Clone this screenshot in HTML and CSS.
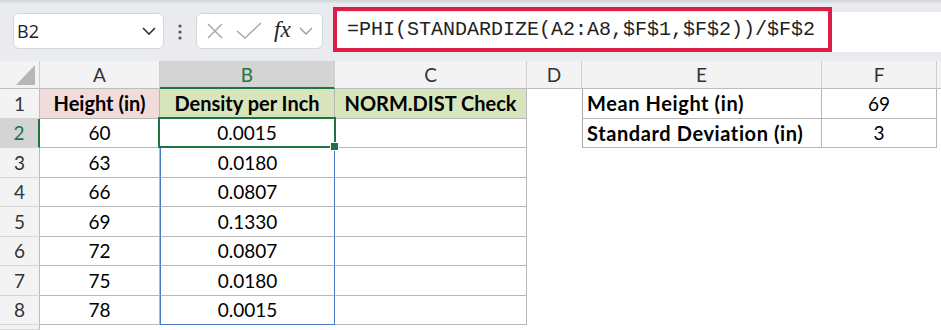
FILE: index.html
```html
<!DOCTYPE html>
<html lang="en">
  <head>
    <meta charset="UTF-8">
    <title>Density per Inch</title>
    <link rel="stylesheet" href="styles.css">
  </head>
  <body>
    <div class="toolbar">
      <div class="namebox">
        <span>B2</span>
        <svg class="chev" width="16" height="10" viewBox="0 0 16 10"><path d="M2 2 L8 8 L14 2" fill="none" stroke="#333" stroke-width="1.6"/></svg>
      </div>
      <div class="dots">
        <svg width="6" height="16" viewBox="0 0 6 16"><circle cx="3" cy="2" r="1.6" fill="#555"/><circle cx="3" cy="8" r="1.6" fill="#555"/><circle cx="3" cy="14" r="1.6" fill="#555"/></svg>
      </div>
      <div class="fxbox">
        <svg width="18" height="16" viewBox="0 0 18 16"><path d="M2 1 L16 15 M16 1 L2 15" stroke="#a9a9a9" stroke-width="1.5"/></svg>
        <svg width="26" height="18" viewBox="0 0 26 18"><path d="M1 9 L9 16 L25 1" fill="none" stroke="#a9a9a9" stroke-width="1.5"/></svg>
        <span class="fx">fx</span>
        <svg width="14" height="8" viewBox="0 0 14 8"><path d="M1 1 L7 7 L13 1" fill="none" stroke="#9a9a9a" stroke-width="1.4"/></svg>
      </div>
      <div class="formula">
        <div class="formula-input">=PHI(STANDARDIZE(A2:A8,$F$1,$F$2))/$F$2</div>
      </div>
    </div>

    <div class="sheet">
      <div class="corner">
        <svg width="40" height="28" viewBox="0 0 40 28"><polygon points="35,4 35,24 16,24" fill="#b7b7b7"/></svg>
      </div>
      <div class="colhead">A</div>
      <div class="colhead active">B</div>
      <div class="colhead">C</div>
      <div class="colhead">D</div>
      <div class="colhead">E</div>
      <div class="colhead">F</div>
      <div class="colhead last"></div>

      <div class="rowhead">1</div>
      <div class="cell b hd pink">Height (in)</div>
      <div class="cell b hd green">Density per Inch</div>
      <div class="cell b hd green">NORM.DIST Check</div>
      <div class="cell"></div>
      <div class="cell b bl hd left">Mean Height (in)</div>
      <div class="cell b">69</div>
      <div class="cell"></div>

      <div class="rowhead active">2</div>
      <div class="cell b">60</div>
      <div class="cell b current">0.0015<span class="sel"><span class="handle"></span></span></div>
      <div class="cell b"></div>
      <div class="cell"></div>
      <div class="cell b bl hd left">Standard Deviation (in)</div>
      <div class="cell b">3</div>
      <div class="cell"></div>

      <div class="rowhead">3</div>
      <div class="cell b">63</div>
      <div class="cell b rng">0.0180</div>
      <div class="cell b"></div>
      <div class="cell blank"></div>

      <div class="rowhead">4</div>
      <div class="cell b">66</div>
      <div class="cell b rng">0.0807</div>
      <div class="cell b"></div>
      <div class="cell blank"></div>

      <div class="rowhead">5</div>
      <div class="cell b">69</div>
      <div class="cell b rng">0.1330</div>
      <div class="cell b"></div>
      <div class="cell blank"></div>

      <div class="rowhead">6</div>
      <div class="cell b">72</div>
      <div class="cell b rng">0.0807</div>
      <div class="cell b"></div>
      <div class="cell blank"></div>

      <div class="rowhead">7</div>
      <div class="cell b">75</div>
      <div class="cell b rng">0.0180</div>
      <div class="cell b"></div>
      <div class="cell blank"></div>

      <div class="rowhead">8</div>
      <div class="cell b">78</div>
      <div class="cell b rng rng-end">0.0015</div>
      <div class="cell b"></div>
      <div class="cell blank"></div>

      <div class="rowhead"></div>
      <div class="cell rest"></div>
    </div>
  </body>
</html>
```

FILE: styles.css
```css
html {
  font-family: Lato, "Liberation Sans", sans-serif;
}

body {
  margin: 0;
  width: 941px;
  height: 330px;
  overflow: hidden;
  background-color: #fff;
}

/* formula bar */

.toolbar {
  display: flex;
  align-items: flex-start;
  height: 61px;
  padding-left: 13px;
  box-sizing: border-box;
  background: linear-gradient(#cfd2d6, #e9ebee 4px);
}

.namebox {
  display: flex;
  align-items: center;
  justify-content: space-between;
  width: 151px;
  height: 36px;
  margin-top: 13px;
  padding: 0 6px 0 3px;
  box-sizing: border-box;
  background-color: #fff;
  border: 1px solid #d3d6da;
  border-radius: 6px;
  font-family: "Open Sans", sans-serif;
  font-size: 18px;
  color: #222;
}

.dots {
  display: flex;
  justify-content: center;
  width: 32px;
  margin-top: 24px;
}

.fxbox {
  display: flex;
  align-items: center;
  gap: 12px;
  width: 127px;
  height: 36px;
  margin-top: 13px;
  padding-left: 9px;
  box-sizing: border-box;
  background-color: #fff;
  border: 1px solid #d3d6da;
  border-radius: 6px;
}

.fx {
  font-family: "Liberation Serif", serif;
  font-style: italic;
  font-size: 23px;
  color: #222;
  margin-top: -3px;
  margin-right: -4px;
}

.formula {
  flex: 1;
  height: 40px;
  margin-top: 12px;
  margin-left: 10px;
  background-color: #fff;
}

.formula-input {
  width: 499px;
  height: 45px;
  margin-top: -5px;
  padding-left: 10px;
  box-sizing: border-box;
  border: 4px solid #dc1d47;
  font-family: "Liberation Mono", monospace;
  font-size: 20px;
  line-height: 37px;
  color: #222;
}

/* grid */

.sheet {
  display: grid;
  grid-template-columns: 40px 120px 175px 192px 55px 240px 115px 1fr;
  grid-template-rows: 28px repeat(8, 29.5px) 1fr;
  height: 269px;
}

.corner,
.colhead {
  background-color: #f3f3f3;
  border-right: 1px solid #cfcfcf;
  border-bottom: 1px solid #bdbdbd;
}

.colhead {
  display: flex;
  align-items: center;
  justify-content: center;
  font-size: 19px;
  color: #333;
}

.colhead.active {
  background-color: #d4d4d4;
  color: #217346;
  border-bottom: 2px solid #217346;
}

.colhead.last {
  border-right: none;
}

.rowhead {
  display: flex;
  align-items: center;
  justify-content: center;
  background-color: #f3f3f3;
  border-right: 1px solid #bdbdbd;
  border-bottom: 1px solid #d6d6d6;
  font-size: 19px;
  color: #333;
}

.rowhead.active {
  background-color: #d4d4d4;
  color: #217346;
  border-right: 2px solid #217346;
}

.cell {
  display: flex;
  align-items: center;
  justify-content: center;
  min-width: 0;
  white-space: nowrap;
  font-size: 19px;
  color: #000;
}

.cell.b {
  border-right: 1px solid #b7b7b7;
  border-bottom: 1px solid #b7b7b7;
}

.cell.bl {
  border-left: 1px solid #a9a9a9;
}

.cell.blank {
  grid-column: 5 / 9;
}

.cell.rest {
  grid-column: 2 / 9;
}

.hd {
  font-weight: bold;
  font-size: 20px;
}

.left {
  justify-content: flex-start;
  padding-left: 4px;
  letter-spacing: 0.6px;
}

.pink {
  background-color: #f2dcdb;
}

.green {
  background-color: #d8e4bc;
}

/* selection */

.cell.current {
  position: relative;
}

.sel {
  position: absolute;
  top: -2px;
  left: -2px;
  right: -2px;
  bottom: -1px;
  border: 2px solid #217346;
}

.handle {
  position: absolute;
  right: -5px;
  bottom: -5px;
  width: 7px;
  height: 7px;
  background-color: #217346;
  border: 1px solid #fff;
}

.cell.rng {
  border-left: 1.5px solid #4a78c4;
  border-right: 1.5px solid #4a78c4;
}

.cell.rng-end {
  border-bottom: 1.5px solid #4a78c4;
}
```
